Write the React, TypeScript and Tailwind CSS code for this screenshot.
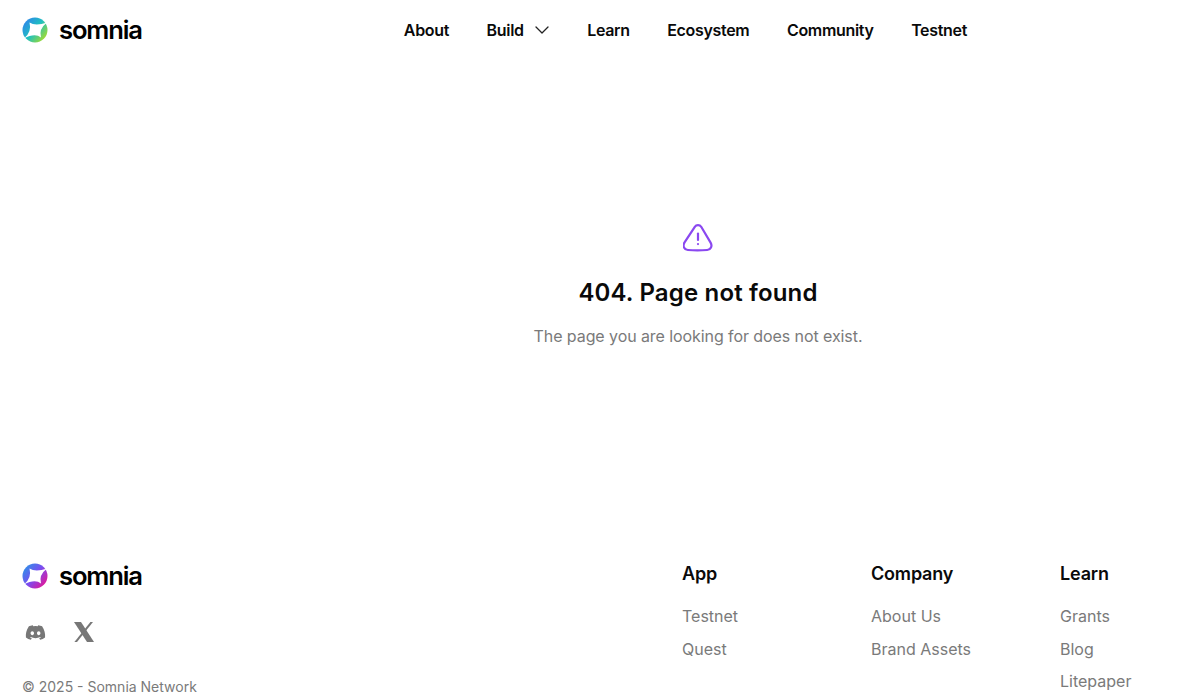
import { FaDiscord } from 'react-icons/fa6'

const navItems = ['About', 'Build', 'Learn', 'Ecosystem', 'Community', 'Testnet']

const footerColumns = [
  { title: 'App', links: ['Testnet', 'Quest'] },
  { title: 'Company', links: ['About Us', 'Brand Assets'] },
  { title: 'Learn', links: ['Grants', 'Blog', 'Litepaper'] },
]

function Logo({ id, from, via, to }: { id: string; from: string; via: string; to: string }) {
  return (
    <div className="flex items-center gap-[11px]">
      <svg width="26" height="26" viewBox="0 0 26 26" className="shrink-0">
        <defs>
          <linearGradient id={id} x1="0.1" y1="0.1" x2="0.95" y2="0.8">
            <stop offset="0" stopColor={from} />
            <stop offset="0.5" stopColor={via} />
            <stop offset="1" stopColor={to} />
          </linearGradient>
        </defs>
        <circle cx="13" cy="13" r="12.5" fill={`url(#${id})`} />
        <path d="M7.5 5.5Q13.5 9.5 25 5.5Q16.5 12 19 20.5Q13 15.5 2 21.5Q10 15 7.5 5.5Z" fill="#fff" />
      </svg>
      <span className="text-[25.6px] leading-none font-semibold tracking-[-0.045em] text-black">somnia</span>
    </div>
  )
}

function XMark() {
  return (
    <svg width="22" height="22" viewBox="0 0 22 22" fill="#777">
      <path d="M1 1h7l13 20h-7z" />
      <path d="M17.4 1h2.6L4 21H1.4z" />
    </svg>
  )
}

export default function App() {
  return (
    <div className="flex h-[694px] flex-col overflow-hidden bg-white font-['Inter',sans-serif]">
      <header className="flex h-[60px] shrink-0 items-center pl-[22px]">
        <Logo id="logo-top" from="#2f86ea" via="#1fc0c0" to="#a4dc2c" />
        <nav className="ml-[262px] flex items-center gap-[37.5px] text-[16px] font-semibold tracking-[-0.02em] text-[#0a0a0a]">
          {navItems.map((item) => (
            <a key={item} className="flex items-center gap-[10px]">
              {item}
              {item === 'Build' && (
                <svg width="16" height="8" viewBox="0 0 16 8" fill="none" stroke="#222" strokeWidth="1.3" strokeLinecap="round" strokeLinejoin="round">
                  <path d="M2 1l6 6 6-6" />
                </svg>
              )}
            </a>
          ))}
        </nav>
      </header>

      <main className="flex h-[499px] shrink-0 flex-col items-center pt-[163px] pl-[196px]">
        <svg width="30" height="30" viewBox="0 0 30 30" fill="none" stroke="#8a48f0" strokeWidth="2.2" strokeLinecap="round" strokeLinejoin="round">
          <path d="M11.8 3.8c1.5-2.3 4.9-2.3 6.4 0l9.4 15.8c2 3.4.2 7-3.4 7.4-6.2.6-13.2.6-19.4 0-3.6-.4-5.4-4-3.4-7.4z" />
          <path d="M15 10.5v6.5" />
          <path d="M15 21v.1" />
        </svg>
        <h1 className="mt-[24px] text-[24px] leading-[32px] font-semibold tracking-[0.007em] text-[#0a0a0a]">404. Page not found</h1>
        <p className="mt-[15px] text-[16px] leading-[24px] tracking-[-0.005em] text-[#7a7a7a]">The page you are looking for does not exist.</p>
      </main>

      <footer className="flex h-[140px] shrink-0 justify-between pl-[22px]">
        <div className="flex flex-col pt-[4px]">
          <Logo id="logo-bottom" from="#2f8fe8" via="#7a4df0" to="#e0189a" />
          <div className="mt-[32px] flex items-center gap-[27px] pl-[3px] text-[#777]">
            <FaDiscord size={21} />
            <XMark />
          </div>
          <p className="mt-[34px] text-[14px] leading-[20px] text-[#7a7a7a]">© 2025 - Somnia Network</p>
        </div>
        <div className="grid grid-cols-[189px_189px_140px]">
          {footerColumns.map((col) => (
            <div key={col.title} className="flex flex-col pt-[1px]">
              <h3 className="text-[18px] leading-[28px] font-semibold tracking-[-0.01em] text-[#0a0a0a]">{col.title}</h3>
              <ul className="mt-[16px] flex flex-col gap-[8.5px] text-[16px] leading-[24px] text-[#7a7a7a]">
                {col.links.map((link) => (
                  <li key={link}>{link}</li>
                ))}
              </ul>
            </div>
          ))}
        </div>
      </footer>
    </div>
  )
}
